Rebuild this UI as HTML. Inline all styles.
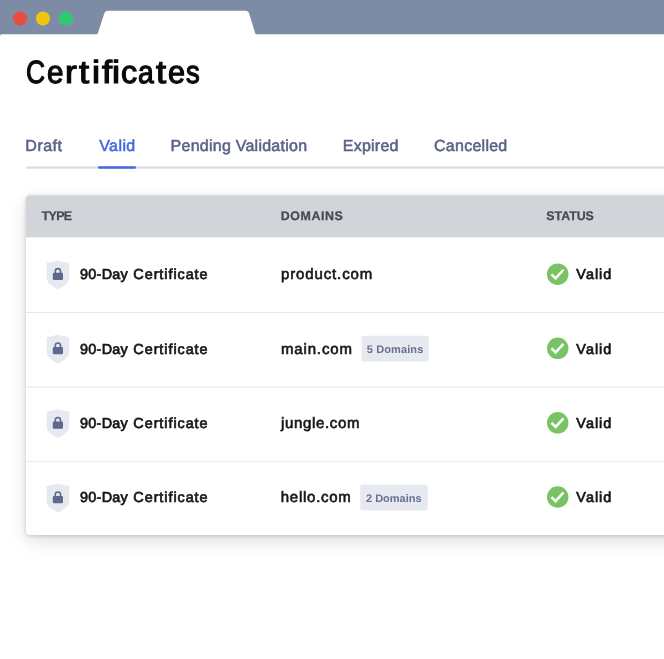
<!DOCTYPE html>
<html>
<head>
<meta charset="utf-8">
<style>
*{box-sizing:border-box;margin:0;padding:0}
html,body{width:664px;height:659px;overflow:hidden;background:#fff;font-family:"Liberation Sans",sans-serif;text-rendering:geometricPrecision}
body{position:relative}
.abs{position:absolute;display:block}
.wrap{position:absolute;left:0;top:0;width:664px;height:659px;will-change:transform}
.bar{position:absolute;left:0;top:0;width:664px;height:40px;background:#7e8ba5}
h1{font-weight:normal;font-size:32px}
.tl{position:absolute;display:block;transform-origin:0 0;font-size:32px;font-weight:normal;color:#0a0a0d;line-height:40px;white-space:nowrap;-webkit-text-stroke:1.2px #0a0a0d}
.tab{position:absolute;font-size:16px;color:#5b6386;line-height:20px;white-space:nowrap;-webkit-text-stroke:0.55px #5b6386}
.tab.act{color:#4269e6;-webkit-text-stroke:0.55px #4269e6}
.card{position:absolute;left:26px;top:195px;width:660px;height:340px;background:#fff;border-radius:4px 0 0 4px;box-shadow:0 6px 18px rgba(0,0,0,.13),0 1px 4px rgba(0,0,0,.17)}
.th{position:absolute;font-size:12.4px;font-weight:bold;color:#46494f;-webkit-text-stroke:0.25px #46494f;line-height:14px;white-space:nowrap}
.cell{position:absolute;font-size:15.0px;color:#15161a;line-height:20px;white-space:nowrap;-webkit-text-stroke:0.62px #15161a}
.cell.b{font-size:14.4px;-webkit-text-stroke:0.7px #15161a}
.badge{position:absolute;height:26px;font-size:11px;font-weight:bold;color:#686f95;line-height:26px;white-space:nowrap}
</style>
</head>
<body>
<div class="bar"></div>
<svg class="abs" style="left:0;top:0" width="90" height="34" viewBox="0 0 90 34"><circle cx="20.05" cy="18.45" r="7.05" fill="#e74c3c"/><circle cx="43" cy="18.45" r="7.05" fill="#f1c40f"/><circle cx="65.9" cy="18.45" r="7.05" fill="#2ecc71"/></svg>
<svg class="abs" style="left:0;top:30px" width="664" height="629" viewBox="0 0 664 629"><path d="M0 629 L0 6 Q0 4.25 1.8 4.25 L664 4.25 L664 629 Z" fill="#fff"/></svg>
<div class="wrap">
<svg class="abs" style="left:90px;top:0" width="180" height="40" viewBox="0 0 180 40"><path d="M6.4 35 Q7.3 34.7 7.8 33.4 L14.3 13.6 Q15.2 10.8 18.2 10.8 L155.4 10.8 Q158.2 10.8 159.1 13.6 L165.3 33.4 Q165.8 34.7 166.8 35 Z" fill="#fff"/></svg>
<h1><span class="tl" style="left:26.20px;top:51.5px;letter-spacing:0.000px;transform:scaleX(0.825)">C</span><span class="tl" style="left:46.99px;top:51.5px;letter-spacing:0.000px;transform:scaleX(0.926)">e</span><span class="tl" style="left:64.93px;top:51.5px;letter-spacing:0.000px;transform:scaleX(1.105)">r</span><span class="tl" style="left:79.01px;top:51.5px;letter-spacing:0.000px;transform:scaleX(1.130)">t</span><span class="tl" style="left:91.51px;top:51.5px;letter-spacing:0.000px;transform:scaleX(1.130)">i</span><span class="tl" style="left:101.51px;top:51.5px;letter-spacing:0.000px;transform:scaleX(1.130)">f</span><span class="tl" style="left:111.51px;top:51.5px;letter-spacing:0.000px;transform:scaleX(1.130)">i</span><span class="tl" style="left:120.63px;top:51.5px;letter-spacing:0.000px;transform:scaleX(1.008)">c</span><span class="tl" style="left:137.62px;top:51.5px;letter-spacing:0.000px;transform:scaleX(0.884)">a</span><span class="tl" style="left:156.16px;top:51.5px;letter-spacing:0.000px;transform:scaleX(1.130)">t</span><span class="tl" style="left:168.26px;top:51.5px;letter-spacing:0.000px;transform:scaleX(0.957)">e</span><span class="tl" style="left:186.27px;top:51.5px;letter-spacing:0.000px;transform:scaleX(0.859)">s</span></h1>
<svg class="abs" style="left:0;top:160px" width="664" height="14" viewBox="0 0 664 14"><rect x="26" y="6.4" width="640" height="2.3" fill="#dcdee3"/><rect x="98" y="6.2" width="38" height="2.6" rx="1.2" fill="#4269e6"/></svg>
<div class="tab" style="left:25.37px;top:137px;letter-spacing:0.482px">Draft</div>
<div class="tab act" style="left:99.16px;top:137px;letter-spacing:0.429px">Valid</div>
<div class="tab" style="left:170.58px;top:137px;letter-spacing:0.249px">Pending Validation</div>
<div class="tab" style="left:342.83px;top:137px;letter-spacing:0.221px">Expired</div>
<div class="tab" style="left:434.06px;top:137px;letter-spacing:0.255px">Cancelled</div>
<div class="card"></div>
<svg class="abs" style="left:26px;top:190px" width="638" height="280" viewBox="0 0 638 280"><path d="M0 47.35 L0 9.3 Q0 5.3 4 5.3 L638 5.3 L638 47.35 Z" fill="#d1d4d9"/><rect x="0" y="121.9" width="638" height="1" fill="#e3e6eb"/><rect x="0" y="196.4" width="638" height="1" fill="#e3e6eb"/><rect x="0" y="270.8" width="638" height="1" fill="#e3e6eb"/></svg>
<div class="th" style="left:41.73px;top:209px;letter-spacing:-0.682px">TYPE</div>
<div class="th" style="left:280.75px;top:209px;letter-spacing:0.598px">DOMAINS</div>
<div class="th" style="left:546.34px;top:209px;letter-spacing:-0.034px">STATUS</div>

<svg class="abs" style="left:44px;top:258px" width="28" height="34" viewBox="0 0 28 34"><g transform="translate(2.60 2.40)"><path d="M0.3 2.3 Q6 1.6 11.3 0 Q16.6 1.6 22.3 2.3 Q22.6 2.3 22.6 2.8 L22.6 17.5 Q22.6 23.5 11.3 28.8 Q0 23.5 0 17.5 L0 2.8 Q0 2.3 0.3 2.3 Z" fill="#e6e9f0"/><rect x="6.2" y="12.4" width="10.2" height="7.2" rx="1.3" fill="#5f678d"/><path d="M8.7 13.3 V10.85 A2.6 2.6 0 0 1 13.9 10.85 V13.3" fill="none" stroke="#5f678d" stroke-width="1.6"/></g></svg>
<div class="cell b" style="left:80.00px;top:265px;letter-spacing:0.285px">90-Day</div>
<div class="cell b" style="left:133.35px;top:265px;letter-spacing:0.944px">Certificate</div>
<div class="cell" style="left:281.00px;top:265px;letter-spacing:0.866px">product.com</div>
<svg class="abs" style="left:545px;top:261px" width="27" height="27" viewBox="0 0 27 27"><g transform="translate(2.00 2.50)"><circle cx="10.7" cy="10.7" r="10.75" fill="#79c365"/><path d="M5.35 11.65 L8.6 14.8 L15.6 7.15" fill="none" stroke="#fff" stroke-width="2.5" stroke-linecap="square" stroke-linejoin="miter"/></g></svg>
<div class="cell b" style="left:576.37px;top:265px;letter-spacing:0.999px">Valid</div>
<svg class="abs" style="left:44px;top:332px" width="28" height="34" viewBox="0 0 28 34"><g transform="translate(2.60 2.70)"><path d="M0.3 2.3 Q6 1.6 11.3 0 Q16.6 1.6 22.3 2.3 Q22.6 2.3 22.6 2.8 L22.6 17.5 Q22.6 23.5 11.3 28.8 Q0 23.5 0 17.5 L0 2.8 Q0 2.3 0.3 2.3 Z" fill="#e6e9f0"/><rect x="6.2" y="12.4" width="10.2" height="7.2" rx="1.3" fill="#5f678d"/><path d="M8.7 13.3 V10.85 A2.6 2.6 0 0 1 13.9 10.85 V13.3" fill="none" stroke="#5f678d" stroke-width="1.6"/></g></svg>
<div class="cell b" style="left:80.00px;top:340px;letter-spacing:0.285px">90-Day</div>
<div class="cell b" style="left:133.35px;top:340px;letter-spacing:0.944px">Certificate</div>
<div class="cell" style="left:280.98px;top:340px;letter-spacing:0.848px">main.com</div>
<svg class="abs" style="left:360px;top:334px" width="71" height="30" viewBox="0 0 71 30"><rect x="1.40" y="1.75" width="67.3" height="25.8" rx="2.5" fill="#e6e9f0"/></svg>
<div class="badge" style="left:366.79px;top:337px;letter-spacing:0.105px">5 Domains</div>
<svg class="abs" style="left:545px;top:335px" width="27" height="27" viewBox="0 0 27 27"><g transform="translate(2.00 2.60)"><circle cx="10.7" cy="10.7" r="10.75" fill="#79c365"/><path d="M5.35 11.65 L8.6 14.8 L15.6 7.15" fill="none" stroke="#fff" stroke-width="2.5" stroke-linecap="square" stroke-linejoin="miter"/></g></svg>
<div class="cell b" style="left:576.37px;top:340px;letter-spacing:0.999px">Valid</div>
<svg class="abs" style="left:44px;top:407px" width="28" height="34" viewBox="0 0 28 34"><g transform="translate(2.60 2.20)"><path d="M0.3 2.3 Q6 1.6 11.3 0 Q16.6 1.6 22.3 2.3 Q22.6 2.3 22.6 2.8 L22.6 17.5 Q22.6 23.5 11.3 28.8 Q0 23.5 0 17.5 L0 2.8 Q0 2.3 0.3 2.3 Z" fill="#e6e9f0"/><rect x="6.2" y="12.4" width="10.2" height="7.2" rx="1.3" fill="#5f678d"/><path d="M8.7 13.3 V10.85 A2.6 2.6 0 0 1 13.9 10.85 V13.3" fill="none" stroke="#5f678d" stroke-width="1.6"/></g></svg>
<div class="cell b" style="left:80.00px;top:414px;letter-spacing:0.285px">90-Day</div>
<div class="cell b" style="left:133.35px;top:414px;letter-spacing:0.944px">Certificate</div>
<div class="cell" style="left:281.05px;top:414px;letter-spacing:0.647px">jungle.com</div>
<svg class="abs" style="left:545px;top:410px" width="27" height="27" viewBox="0 0 27 27"><g transform="translate(2.00 2.10)"><circle cx="10.7" cy="10.7" r="10.75" fill="#79c365"/><path d="M5.35 11.65 L8.6 14.8 L15.6 7.15" fill="none" stroke="#fff" stroke-width="2.5" stroke-linecap="square" stroke-linejoin="miter"/></g></svg>
<div class="cell b" style="left:576.37px;top:414px;letter-spacing:0.999px">Valid</div>
<svg class="abs" style="left:44px;top:481px" width="28" height="34" viewBox="0 0 28 34"><g transform="translate(2.60 2.70)"><path d="M0.3 2.3 Q6 1.6 11.3 0 Q16.6 1.6 22.3 2.3 Q22.6 2.3 22.6 2.8 L22.6 17.5 Q22.6 23.5 11.3 28.8 Q0 23.5 0 17.5 L0 2.8 Q0 2.3 0.3 2.3 Z" fill="#e6e9f0"/><rect x="6.2" y="12.4" width="10.2" height="7.2" rx="1.3" fill="#5f678d"/><path d="M8.7 13.3 V10.85 A2.6 2.6 0 0 1 13.9 10.85 V13.3" fill="none" stroke="#5f678d" stroke-width="1.6"/></g></svg>
<div class="cell b" style="left:80.00px;top:488px;letter-spacing:0.285px">90-Day</div>
<div class="cell b" style="left:133.35px;top:488px;letter-spacing:0.944px">Certificate</div>
<div class="cell" style="left:280.79px;top:488px;letter-spacing:0.735px">hello.com</div>
<svg class="abs" style="left:359px;top:483px" width="71" height="30" viewBox="0 0 71 30"><rect x="1.20" y="1.60" width="67.5" height="25.8" rx="2.5" fill="#e6e9f0"/></svg>
<div class="badge" style="left:366.01px;top:486px;letter-spacing:-0.013px">2 Domains</div>
<svg class="abs" style="left:545px;top:484px" width="27" height="27" viewBox="0 0 27 27"><g transform="translate(2.00 2.30)"><circle cx="10.7" cy="10.7" r="10.75" fill="#79c365"/><path d="M5.35 11.65 L8.6 14.8 L15.6 7.15" fill="none" stroke="#fff" stroke-width="2.5" stroke-linecap="square" stroke-linejoin="miter"/></g></svg>
<div class="cell b" style="left:576.37px;top:488px;letter-spacing:0.999px">Valid</div>
</div>
</body>
</html>
